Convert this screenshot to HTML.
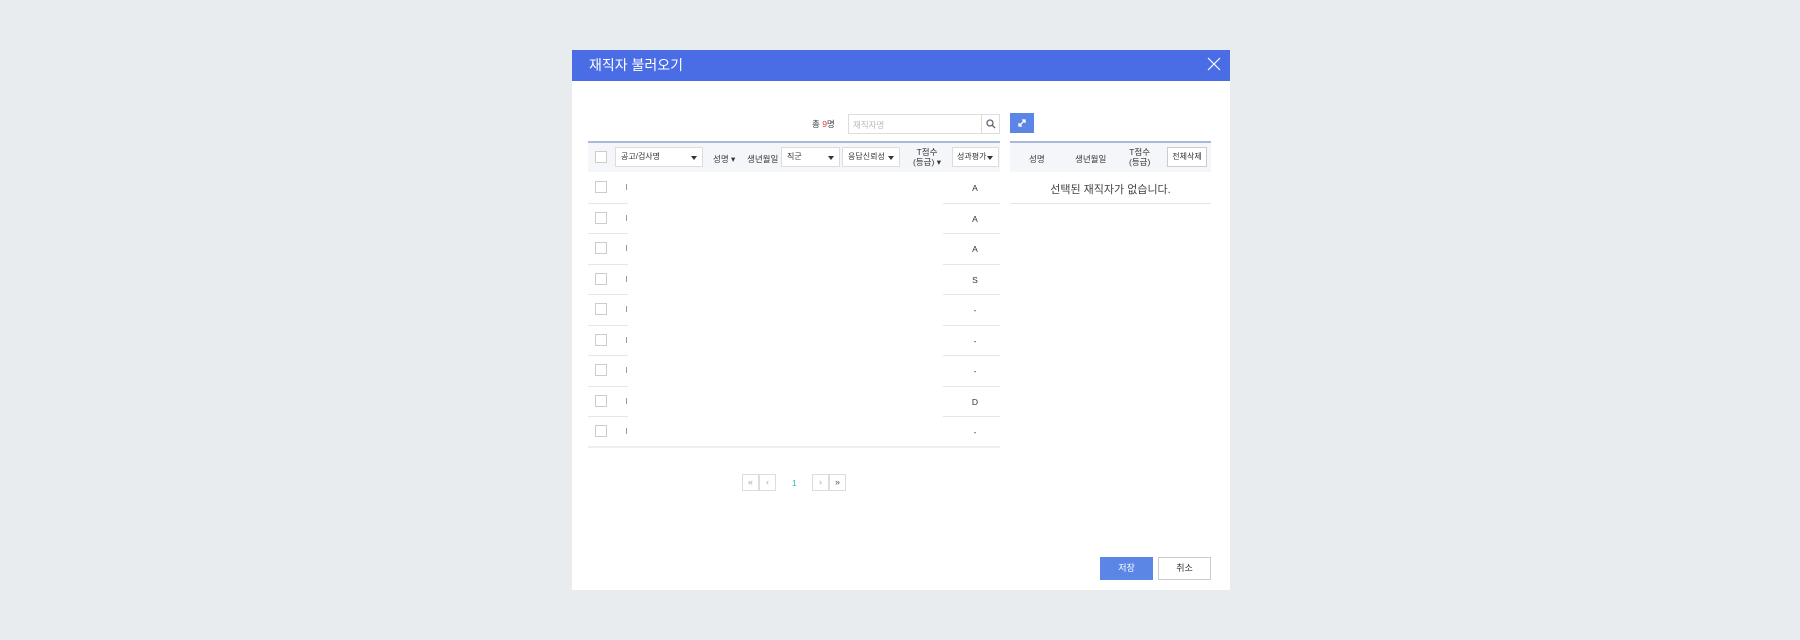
<!DOCTYPE html>
<html><head><meta charset="utf-8"><style>
*{margin:0;padding:0;box-sizing:border-box}
body{width:1800px;height:640px;background:#e8ecef;font-family:"Liberation Sans","Noto Sans CJK KR",sans-serif;position:relative;overflow:hidden;color:#333}
.a{position:absolute;white-space:nowrap}
.modal{left:572px;top:50px;width:658px;height:540px;background:#fff}
.hd{left:572px;top:50px;width:658px;height:31px;background:#4a6de5;color:#fff;font-size:14px;line-height:31px;padding-left:17px}
.sel{border:1px solid #ddd;background:#fff;font-size:8px;line-height:18px;padding-left:5px;height:20px}
.sel:after{content:"";position:absolute;right:5px;top:8px;border:3px solid transparent;border-top:4px solid #333}
.t{font-size:8.5px;color:#333}
.cb{width:12px;height:12px;border:1px solid #ccc;background:#fff}
.ln{height:1px;background:#e6e6e6}
.pg{width:17px;height:17px;border:1px solid #ddd;font-size:9px;color:#aaa;text-align:center;line-height:15px}
</style></head><body>
<div class="a modal"></div>
<div class="a hd">재직자 불러오기</div>
<svg class="a" style="left:1207px;top:57px" width="14" height="14"><path d="M1 1L13 13M13 1L1 13" stroke="#fff" stroke-width="1.2"/></svg>

<div class="a t" style="left:812px;top:118px">총 <span style="color:#e33">9</span>명</div>
<div class="a" style="left:848px;top:114px;width:152px;height:20px;border:1px solid #ddd"></div>
<div class="a t" style="left:853px;top:119px;color:#bbb">재직자명</div>
<div class="a" style="left:981px;top:114px;width:1px;height:20px;background:#ddd"></div>
<svg class="a" style="left:986px;top:119px" width="10" height="10"><circle cx="4" cy="4" r="3" fill="none" stroke="#667" stroke-width="1.3"/><path d="M6.3 6.3L9 9" stroke="#667" stroke-width="1.4"/></svg>
<div class="a" style="left:1010px;top:113px;width:24px;height:20px;background:#5b86e5"></div>
<svg class="a" style="left:1017px;top:118px" width="10" height="10"><path d="M2 8L8 2M5 2H8V5M2 5V8H5" stroke="#fff" stroke-width="1.3" fill="none"/></svg>

<div class="a" style="left:588px;top:141px;width:412px;height:2px;background:#a9b9dc"></div>
<div class="a" style="left:588px;top:143px;width:412px;height:29px;background:#f4f6f9"></div>
<div class="a cb" style="left:595px;top:151px"></div>
<div class="a sel" style="left:615px;top:147px;width:88px">공고/검사명</div>
<div class="a t" style="left:713px;top:153px">성명 ▾</div>
<div class="a t" style="left:747px;top:153px">생년월일</div>
<div class="a sel" style="left:781px;top:147px;width:59px">직군</div>
<div class="a sel" style="left:842px;top:147px;width:58px">응답신뢰성</div>
<div class="a t" style="left:910px;top:147px;text-align:center;line-height:10px;width:34px">T점수<br>(등급) ▾</div>
<div class="a sel" style="left:952px;top:147px;width:47px;padding-left:4px">성과평가</div>

<script>
var g=["A","A","A","S","-","-","-","D","-"],h="";
for(var i=0;i<9;i++){var y=172+i*30.5;
h+='<div class="a cb" style="left:595px;top:'+(y+9)+'px"></div>';
h+='<div class="a" style="left:626px;top:'+(y+12)+'px;width:1px;height:6px;background:#999"></div>';
h+='<div class="a t" style="left:969px;top:'+(y+11)+'px;width:12px;text-align:center">'+g[i]+'</div>';
if(i<8){h+='<div class="a ln" style="left:588px;top:'+(y+30.5)+'px;width:40px"></div><div class="a ln" style="left:943px;top:'+(y+30.5)+'px;width:57px"></div>';}
}
h+='<div class="a" style="left:588px;top:446px;width:412px;height:2px;background:#eee"></div>';
document.write(h);
</script>

<div class="a" style="left:1010px;top:141px;width:201px;height:2px;background:#a9b9dc"></div>
<div class="a" style="left:1010px;top:143px;width:201px;height:29px;background:#f4f6f9"></div>
<div class="a t" style="left:1029px;top:153px">성명</div>
<div class="a t" style="left:1075px;top:153px">생년월일</div>
<div class="a t" style="left:1129px;top:147px;line-height:10px;text-align:center">T점수<br>(등급)</div>
<div class="a" style="left:1167px;top:147px;width:40px;height:20px;border:1px solid #ccc;background:#fff;font-size:8px;line-height:18px;text-align:center">전체삭제</div>
<div class="a" style="left:1010px;top:181px;width:201px;text-align:center;font-size:11px;color:#444">선택된 재직자가 없습니다.</div>
<div class="a ln" style="left:1010px;top:203px;width:201px"></div>

<div class="a pg" style="left:742px;top:474px">«</div>
<div class="a pg" style="left:759px;top:474px">‹</div>
<div class="a t" style="left:792px;top:478px;color:#3bb">1</div>
<div class="a pg" style="left:812px;top:474px">›</div>
<div class="a pg" style="left:829px;top:474px;color:#555">»</div>

<div class="a" style="left:1100px;top:557px;width:53px;height:23px;background:#5b86e5;color:#fff;font-size:9px;text-align:center;line-height:23px">저장</div>
<div class="a" style="left:1158px;top:557px;width:53px;height:23px;border:1px solid #ccc;font-size:9px;text-align:center;line-height:21px">취소</div>
</body></html>
